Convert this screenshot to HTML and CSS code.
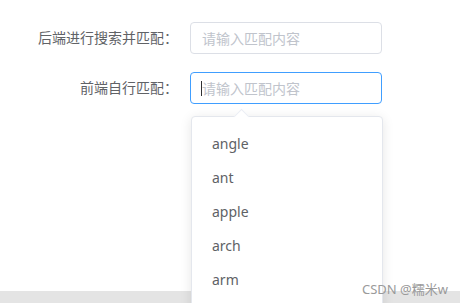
FILE: index.html
```html
<!DOCTYPE html>
<html lang="zh-CN">
<head>
    <meta charset="UTF-8">
    <meta name="viewport" content="width=device-width, initial-scale=1.0">
    <title>自动补全</title>
    <link rel="stylesheet" href="styles.css">
</head>
<body>
    <div class="page">
        <div class="form">
            <div class="form-item">
                <label class="form-label">后端进行搜索并匹配：</label>
                <div class="input-wrap">
                    <input class="input" type="text" placeholder="请输入匹配内容">
                </div>
            </div>
            <div class="form-item">
                <label class="form-label">前端自行匹配：</label>
                <div class="input-wrap">
                    <input class="input is-focus" type="text" placeholder="请输入匹配内容">
                    <span class="caret"></span>
                    <div class="suggestion">
                        <span class="arrow"></span>
                        <ul class="suggestion-list">
                            <li>angle</li>
                            <li>ant</li>
                            <li>apple</li>
                            <li>arch</li>
                            <li>arm</li>
                        </ul>
                    </div>
                </div>
            </div>
        </div>
        <div class="bottom-bar"></div>
    </div>
    <div class="watermark">CSDN @糯米w</div>
</body>
</html>
```

FILE: styles.css
```css
html, body {
    margin: 0;
    height: 100%;
    overflow: hidden;
}
body {
    font-family: "Noto Sans", "Noto Sans CJK SC", sans-serif;
    font-size: 14px;
    color: #606266;
    background: #fff;
}
.page {
    display: flex;
    flex-direction: column;
    height: 100vh;
}
.form {
    flex: 1;
    padding-top: 22px;
}
.form-item {
    display: flex;
    align-items: center;
    margin-bottom: 18px;
}
.form-label {
    width: 178px;
    padding-right: 12px;
    text-align: right;
    line-height: 32px;
}
.input-wrap {
    position: relative;
    width: 192px;
}
.input {
    box-sizing: border-box;
    width: 100%;
    height: 32px;
    padding: 0 11px;
    border: 1px solid #dcdfe6;
    border-radius: 4px;
    font-family: inherit;
    font-size: 14px;
    color: #606266;
    outline: none;
    background: #fff;
}
.input::placeholder {
    color: #c0c4cc;
}
.input.is-focus {
    border-color: #409eff;
}
.caret {
    position: absolute;
    left: 11px;
    top: 9px;
    width: 1px;
    height: 15px;
    background: #303133;
}
.suggestion {
    position: absolute;
    top: 44px;
    left: 1px;
    width: 192px;
    box-sizing: border-box;
    background: #fff;
    border: 1px solid #e4e7ed;
    border-radius: 4px;
    box-shadow: 0 2px 12px rgba(0, 0, 0, 0.1);
    z-index: 2;
}
.arrow {
    position: absolute;
    top: -6px;
    left: 44px;
    width: 10px;
    height: 10px;
    background: #fff;
    border-left: 1px solid #ebeef5;
    border-top: 1px solid #ebeef5;
    transform: rotate(45deg);
}
.suggestion-list {
    position: relative;
    list-style: none;
    margin: 0;
    padding: 10px 0 20px;
}
.suggestion-list li {
    padding: 0 20px;
    line-height: 34px;
    color: #606266;
}
.bottom-bar {
    height: 12px;
    background: #e4e4e4;
}
.watermark {
    position: absolute;
    left: 362px;
    top: 279px;
    font-size: 13px;
    color: #9a9a9a;
    z-index: 3;
}
```
